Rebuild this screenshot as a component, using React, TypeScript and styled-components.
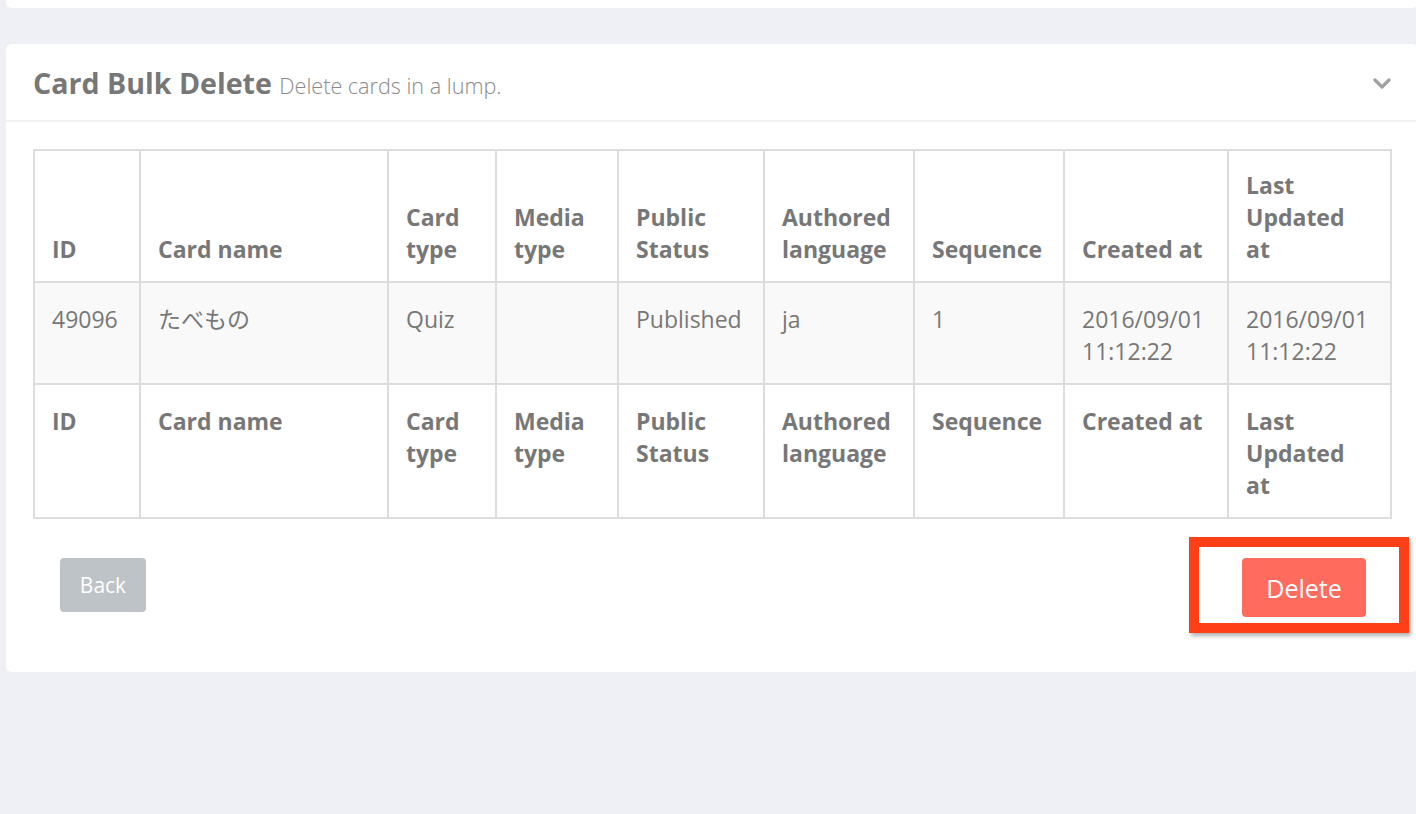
import { createGlobalStyle } from 'styled-components'
import styled from 'styled-components'

const GlobalStyle = createGlobalStyle`
  html, body {
    margin: 0;
    padding: 0;
    background: #eff0f5;
    overflow: hidden;
  }
  body {
    font-family: 'Open Sans', 'Noto Sans CJK JP', sans-serif;
    color: #777;
  }
`

const COLUMNS = [
  { label: 'ID', width: 106 },
  { label: 'Card name', width: 248 },
  { label: 'Card type', width: 108 },
  { label: 'Media type', width: 122 },
  { label: 'Public Status', width: 146 },
  { label: 'Authored language', width: 150 },
  { label: 'Sequence', width: 150 },
  { label: 'Created at', width: 164 },
  { label: 'Last Updated at', width: 163 },
]

const ROWS = [
  ['49096', 'たべもの', 'Quiz', '', 'Published', 'ja', '1', '2016/09/01 11:12:22', '2016/09/01 11:12:22'],
]

const ChevronDown = () => (
  <svg width="18" height="12" viewBox="0 0 18 12">
    <polyline points="2,2 9,9 16,2" fill="none" stroke="#a0a0a0" strokeWidth="3.2" strokeLinecap="round" strokeLinejoin="round" />
  </svg>
)

const App = () => {
  return (
    <Page>
      <GlobalStyle />
      <TopCard />
      <Card>
        <CardHeader>
          <Title>
            Card Bulk Delete <Subtitle>Delete cards in a lump.</Subtitle>
          </Title>
          <ToggleButton>
            <ChevronDown />
          </ToggleButton>
        </CardHeader>
        <CardBody>
          <Table>
            <colgroup>
              {COLUMNS.map((c) => (
                <col key={c.label} style={{ width: c.width }} />
              ))}
            </colgroup>
            <thead>
              <tr>
                {COLUMNS.map((c) => (
                  <HeadCell key={c.label} valign="bottom">{c.label}</HeadCell>
                ))}
              </tr>
            </thead>
            <tbody>
              {ROWS.map((row) => (
                <DataRow key={row[0]}>
                  {row.map((v, i) => (
                    <DataCell key={i}>{v}</DataCell>
                  ))}
                </DataRow>
              ))}
            </tbody>
            <tfoot>
              <tr>
                {COLUMNS.map((c) => (
                  <HeadCell key={c.label} valign="top">{c.label}</HeadCell>
                ))}
              </tr>
            </tfoot>
          </Table>
          <Actions>
            <Button variant="back">Back</Button>
            <Highlight>
              <Button variant="danger">Delete</Button>
              <Marker />
            </Highlight>
          </Actions>
        </CardBody>
      </Card>
    </Page>
  )
}

const Page = styled.div`
  padding-left: 6px;
  min-height: 814px;
  box-sizing: border-box;
`

const TopCard = styled.div`
  width: 1412px;
  height: 8px;
  background: #fff;
  border-radius: 0 0 6px 6px;
`

const Card = styled.div`
  width: 1412px;
  margin-top: 36px;
  background: #fff;
  border-radius: 6px;
  height: 628px;
`

const CardHeader = styled.div`
  display: flex;
  align-items: center;
  justify-content: space-between;
  height: 76px;
  padding: 0 27px 0 27px;
  border-bottom: 2px solid #f1f1f4;
`

const Title = styled.h2`
  margin: 0;
  font-size: 28.6px;
  font-weight: 700;
  color: #777;
`

const Subtitle = styled.small`
  font-size: 21.6px;
  font-weight: 300;
  color: #8a8a8a;
`

const ToggleButton = styled.span`
  display: flex;
  margin-top: 4px;
  margin-right: 0;
`

const CardBody = styled.div`
  padding: 27px 27px 0 27px;
`

const Table = styled.table`
  width: 1357px;
  table-layout: fixed;
  border-collapse: collapse;
  border: 2px solid #dddddd;
  font-size: 23px;
  line-height: 32px;
`

const HeadCell = styled.th<{ valign: 'top' | 'bottom' }>`
  text-align: left;
  font-weight: 700;
  color: #777;
  padding: ${(p) => (p.valign === 'bottom' ? '18px 17px 16px' : '20px 17px 16px')};
  border: 2px solid #dddddd;
  vertical-align: ${(p) => p.valign};
`

const DataRow = styled.tr`
  background: #f9f9f9;
`

const DataCell = styled.td`
  padding: 20px 17px 16px 17px;
  border: 2px solid #dddddd;
  vertical-align: top;
  color: #777;
  font-weight: 400;
`

const Actions = styled.div`
  display: flex;
  justify-content: space-between;
  align-items: flex-start;
  margin-top: 39px;
  padding: 0 25px 0 27px;
`

const Button = styled.button<{ variant: 'back' | 'danger' }>`
  border: none;
  border-radius: 4px;
  color: #fff;
  font-family: 'Open Sans', sans-serif;
  font-size: ${(p) => (p.variant === 'danger' ? '25px' : '21px')};
  background: ${(p) => (p.variant === 'danger' ? '#ff6b5d' : '#bec3c7')};
  width: ${(p) => (p.variant === 'danger' ? '124px' : '86px')};
  height: ${(p) => (p.variant === 'danger' ? '59px' : '54px')};
  padding: 0;
`

const Highlight = styled.div`
  position: relative;
  display: flex;
`

const Marker = styled.div`
  position: absolute;
  top: -21px;
  left: -53px;
  right: -43px;
  bottom: -16px;
  border: 10px solid #ff3f17;
  box-shadow: 2px 3px 4px rgba(0, 0, 0, 0.3);
  pointer-events: none;
`

export default App
